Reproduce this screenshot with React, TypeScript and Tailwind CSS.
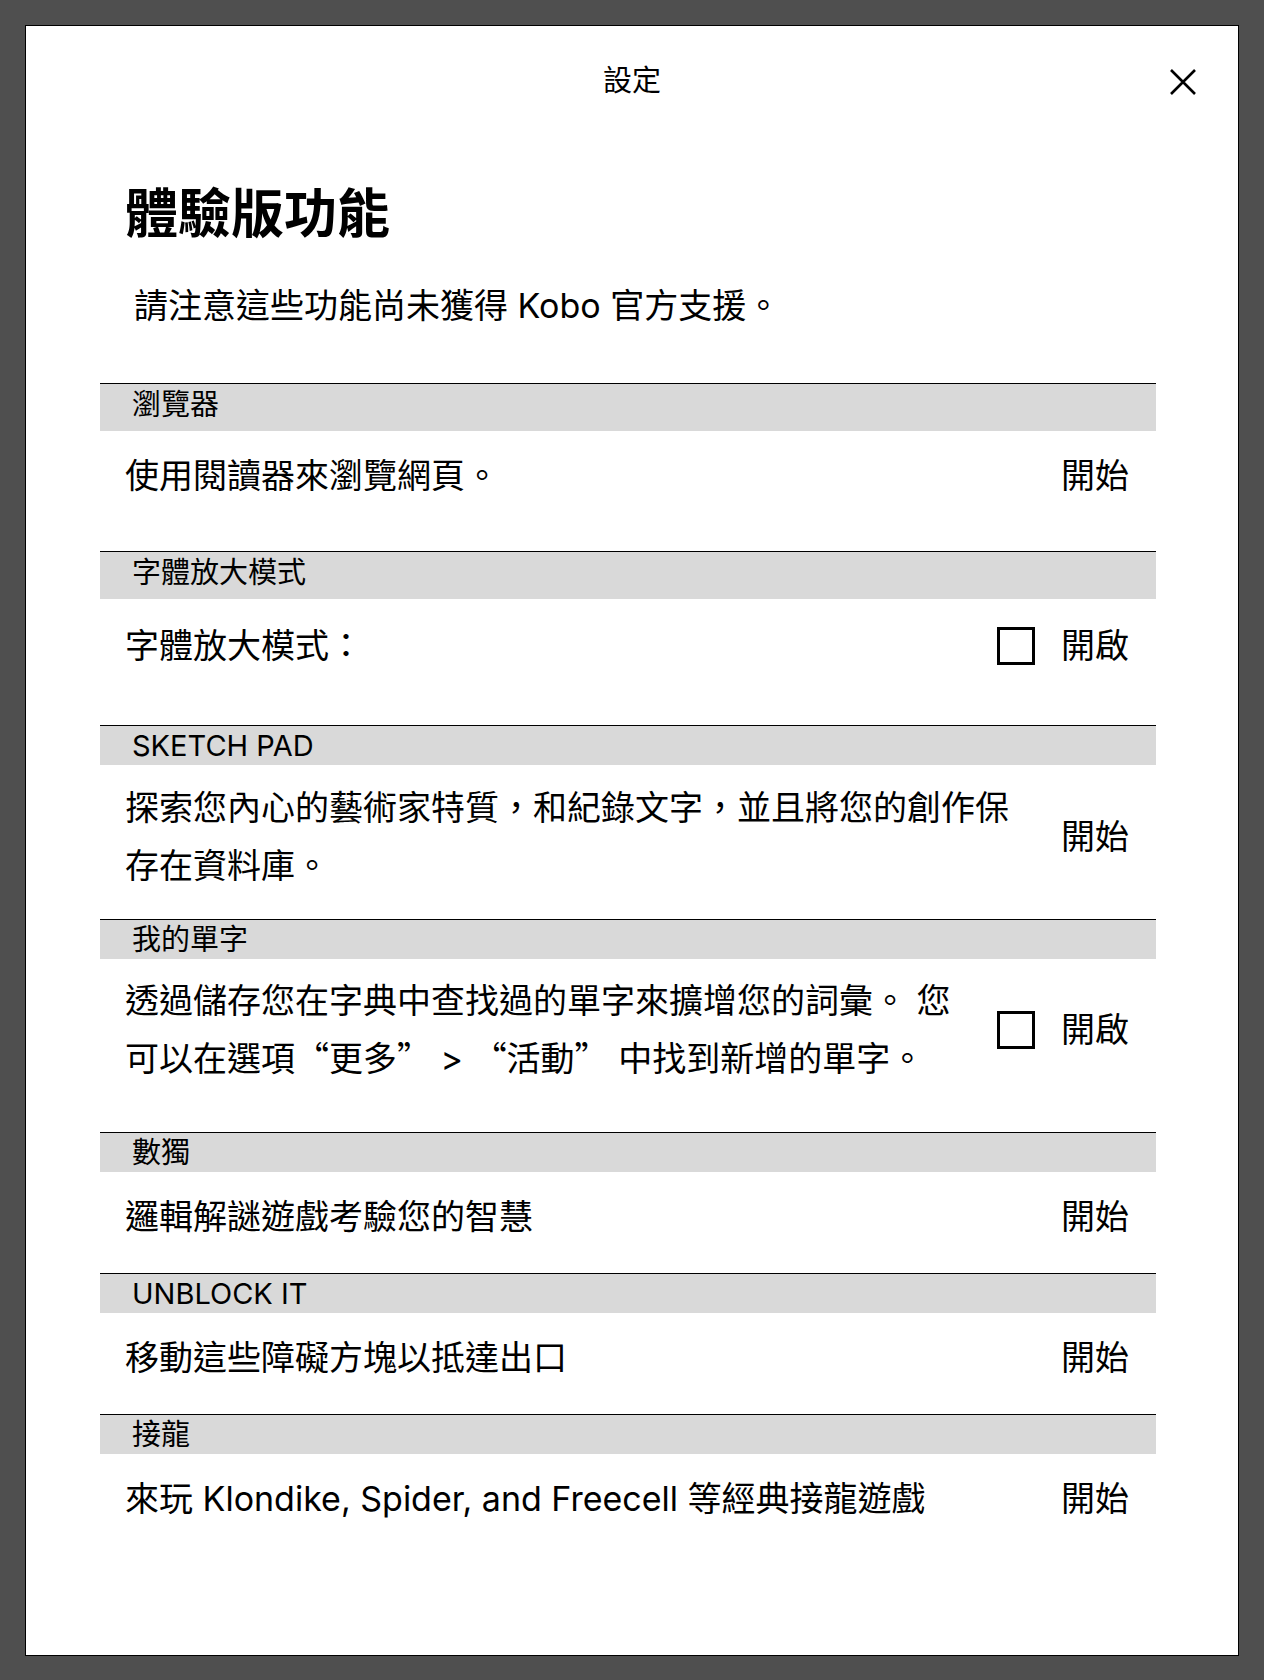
import React from "react";

const FONT = {
  fontFamily: 'Inter, "Noto Sans CJK TC", sans-serif',
};

function SectionHeader({ title, tall }: { title: string; tall: boolean }) {
  return (
    <div
      className={`flex items-center border-t border-black bg-[#d9d9d9] pl-[32px] text-[29px] leading-none text-black ${
        tall ? "h-[48px] pb-[6px]" : "h-[40px]"
      }`}
    >
      {title}
    </div>
  );
}

function Control({ kind }: { kind: "start" | "check" }) {
  if (kind === "start") {
    return <div className="shrink-0 text-[34px] leading-[58px]">開始</div>;
  }
  return (
    <div className="flex shrink-0 items-center gap-[26px]">
      <div className="h-[38px] w-[38px] border-[3px] border-black" />
      <div className="text-[34px] leading-[58px]">開啟</div>
    </div>
  );
}

function Q({ children }: { children: React.ReactNode }) {
  return (
    <span className="font-['Noto_Sans_CJK_TC'] leading-none [font-feature-settings:'fwid']">{children}</span>
  );
}

export default function App() {
  const rows: {
    title: string;
    tall: boolean;
    text: React.ReactNode;
    control: "start" | "check";
    pad: string;
  }[] = [
    { title: "瀏覽器", tall: true, text: "使用閱讀器來瀏覽網頁。", control: "start", pad: "pt-[16px] pb-[46px]" },
    { title: "字體放大模式", tall: true, text: "字體放大模式：", control: "check", pad: "pt-[18px] pb-[50px]" },
    {
      title: "SKETCH PAD",
      tall: false,
      text: "探索您內心的藝術家特質，和紀錄文字，並且將您的創作保存在資料庫。",
      control: "start",
      pad: "pt-[14px] pb-[24px]",
    },
    {
      title: "我的單字",
      tall: false,
      text: (
        <>
          透過儲存您在字典中查找過的單字來擴增您的詞彙。 您可以在選項<Q>“更多”</Q> &gt; <Q>“活動”</Q> 中找到新增的單字。
        </>
      ),
      control: "check",
      pad: "pt-[13px] pb-[44px]",
    },
    { title: "數獨", tall: false, text: "邏輯解謎遊戲考驗您的智慧", control: "start", pad: "pt-[16px] pb-[27px]" },
    { title: "UNBLOCK IT", tall: false, text: "移動這些障礙方塊以抵達出口", control: "start", pad: "pt-[16px] pb-[27px]" },
    {
      title: "接龍",
      tall: false,
      text: "來玩 Klondike, Spider, and Freecell 等經典接龍遊戲",
      control: "start",
      pad: "pt-[16px] pb-[27px]",
    },
  ];

  return (
    <div className="min-h-[1680px] bg-[#4f4f4f] px-[25px] pt-[25px] text-black" style={FONT}>
      <div className="flex h-[1631px] w-[1214px] flex-col border border-black bg-white">
        <div className="relative flex h-[109px] shrink-0 items-center justify-center">
          <div className="text-[29px] leading-none">設定</div>
          <button className="absolute right-[41px] top-[42px] flex h-[28px] w-[28px] items-center justify-center">
            <svg width="28" height="28" viewBox="0 0 28 28">
              <path d="M2 2 L26 26 M26 2 L2 26" stroke="black" strokeWidth="2.6" fill="none" />
            </svg>
          </button>
        </div>

        <h1 className="ml-[99px] mt-[51px] text-[53px] font-bold leading-[56px]">體驗版功能</h1>
        <p className="ml-[108px] mt-[44px] text-[34px] leading-[40px]">請注意這些功能尚未獲得 Kobo 官方支援。</p>

        <div className="ml-[74px] mt-[57px] w-[1056px]">
          {rows.map((r) => (
            <div key={r.title}>
              <SectionHeader title={r.title} tall={r.tall} />
              <div className={`flex items-center gap-[32px] pl-[25px] pr-[27px] ${r.pad}`}>
                <div className="flex-1 text-[34px] leading-[58px]">{r.text}</div>
                <Control kind={r.control} />
              </div>
            </div>
          ))}
        </div>
      </div>
    </div>
  );
}
